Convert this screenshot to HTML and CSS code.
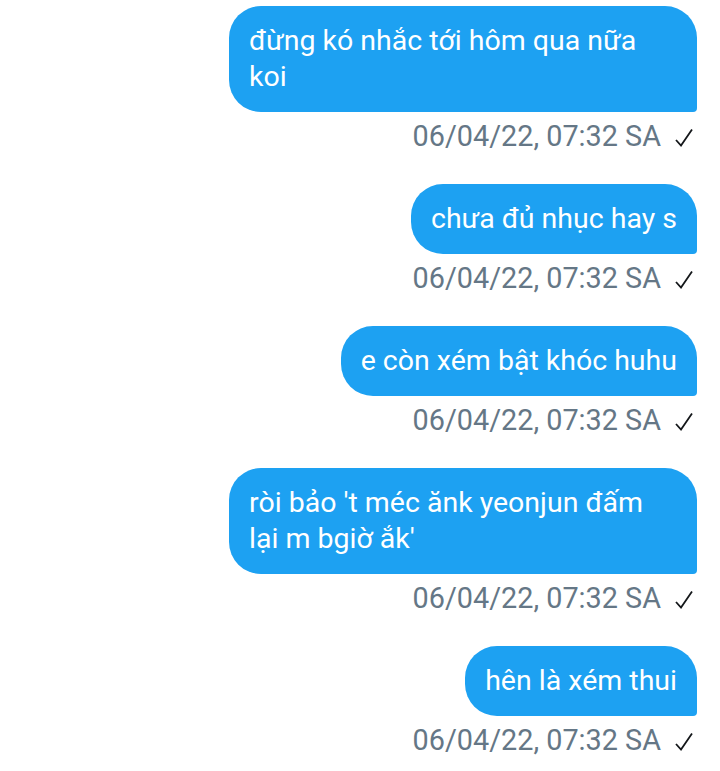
FILE: index.html
```html
<!DOCTYPE html>
<html lang="vi">
<head>
<meta charset="utf-8">
<link rel="stylesheet" href="styles.css">
</head>
<body>
<main class="chat">
  <div class="msg">
    <div class="bubble wide">đừng kó nhắc tới hôm qua nữa koi</div>
    <div class="meta"><span class="time">06/04/22, 07:32 SA</span><svg class="check" viewBox="0 0 18 19"><path d="M1 12 L6 17.5 L17 1.5" fill="none" stroke="#14171a" stroke-width="1.8"/></svg></div>
  </div>
  <div class="msg">
    <div class="bubble">chưa đủ nhục hay s</div>
    <div class="meta"><span class="time">06/04/22, 07:32 SA</span><svg class="check" viewBox="0 0 18 19"><path d="M1 12 L6 17.5 L17 1.5" fill="none" stroke="#14171a" stroke-width="1.8"/></svg></div>
  </div>
  <div class="msg">
    <div class="bubble">e còn xém bật khóc huhu</div>
    <div class="meta"><span class="time">06/04/22, 07:32 SA</span><svg class="check" viewBox="0 0 18 19"><path d="M1 12 L6 17.5 L17 1.5" fill="none" stroke="#14171a" stroke-width="1.8"/></svg></div>
  </div>
  <div class="msg">
    <div class="bubble wide">ròi bảo 't méc ănk yeonjun đấm lại m bgiờ ắk'</div>
    <div class="meta"><span class="time">06/04/22, 07:32 SA</span><svg class="check" viewBox="0 0 18 19"><path d="M1 12 L6 17.5 L17 1.5" fill="none" stroke="#14171a" stroke-width="1.8"/></svg></div>
  </div>
  <div class="msg">
    <div class="bubble">hên là xém thui</div>
    <div class="meta"><span class="time">06/04/22, 07:32 SA</span><svg class="check" viewBox="0 0 18 19"><path d="M1 12 L6 17.5 L17 1.5" fill="none" stroke="#14171a" stroke-width="1.8"/></svg></div>
  </div>
</main>
</body>
</html>
```
FILE: styles.css
```css
html, body {
  margin: 0;
  padding: 0;
  background: #ffffff;
}
body {
  font-family: Roboto, "Noto Sans", "Liberation Sans", sans-serif;
}
.chat {
  display: flex;
  flex-direction: column;
  align-items: flex-end;
  padding: 6px 23px 0 0;
  gap: 32px;
}
.msg {
  display: flex;
  flex-direction: column;
  align-items: flex-end;
}
.bubble {
  background: #1da1f2;
  color: #ffffff;
  font-size: 28.5px;
  line-height: 36px;
  padding: 17px 20px;
  border-radius: 32px 32px 4px 32px;
  max-width: 428px;
}
.bubble.wide {
  width: 428px;
}
.meta {
  display: flex;
  align-items: center;
  margin-top: 8px;
  height: 32px;
  padding-right: 4px;
}
.time {
  color: #657786;
  font-size: 28.8px;
  line-height: 32px;
}
.check {
  width: 18px;
  height: 19px;
  margin-left: 14px;
  margin-top: 2px;
}
```
